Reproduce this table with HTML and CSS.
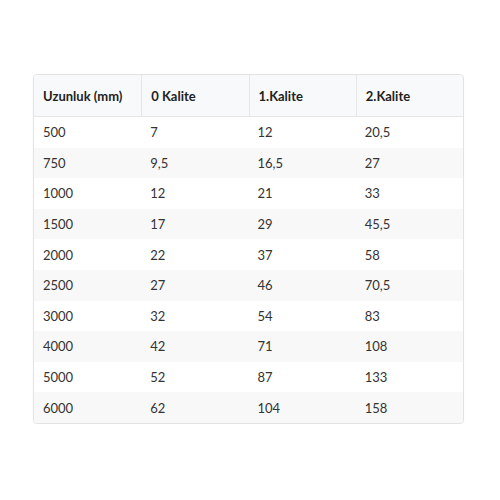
FILE: index.html
```html
<!DOCTYPE html>
<html lang="tr">
<head>
<meta charset="utf-8">
<link rel="stylesheet" href="styles.css">
</head>
<body>
<div class="wrap">
  <table class="sizes">
    <thead>
      <tr><th>Uzunluk (mm)</th><th>0 Kalite</th><th>1.Kalite</th><th>2.Kalite</th></tr>
    </thead>
    <tbody>
      <tr><td>500</td><td>7</td><td>12</td><td>20,5</td></tr>
      <tr><td>750</td><td>9,5</td><td>16,5</td><td>27</td></tr>
      <tr><td>1000</td><td>12</td><td>21</td><td>33</td></tr>
      <tr><td>1500</td><td>17</td><td>29</td><td>45,5</td></tr>
      <tr><td>2000</td><td>22</td><td>37</td><td>58</td></tr>
      <tr><td>2500</td><td>27</td><td>46</td><td>70,5</td></tr>
      <tr><td>3000</td><td>32</td><td>54</td><td>83</td></tr>
      <tr><td>4000</td><td>42</td><td>71</td><td>108</td></tr>
      <tr><td>5000</td><td>52</td><td>87</td><td>133</td></tr>
      <tr><td>6000</td><td>62</td><td>104</td><td>158</td></tr>
    </tbody>
  </table>
</div>
</body>
</html>
```
FILE: styles.css
```css
html, body {
  margin: 0;
  padding: 0;
  background: #ffffff;
}
body {
  font-family: Lato, "Liberation Sans", sans-serif;
  color: #333333;
}
.wrap {
  padding: 74px 0 0 33px;
}
.sizes {
  width: 431px;
  border-collapse: separate;
  border-spacing: 0;
  border: 1px solid #e3e3e3;
  border-radius: 4px;
  overflow: hidden;
  font-size: 13px;
  table-layout: fixed;
  box-shadow: 0 1px 2px rgba(0,0,0,0.04);
}
.sizes th {
  height: 41px;
  padding: 0 9px;
  text-align: left;
  font-weight: 700;
  color: #222222;
  background: #f8f9fa;
  border-bottom: 1px solid #e6e6e6;
  border-left: 1px solid #e6e6e6;
}
.sizes th:first-child {
  border-left: none;
}
.sizes td {
  height: 30.6px;
  padding: 0 9px;
  text-align: left;
}
.sizes tbody tr:nth-child(even) td {
  background: #f8f8f8;
}
```
